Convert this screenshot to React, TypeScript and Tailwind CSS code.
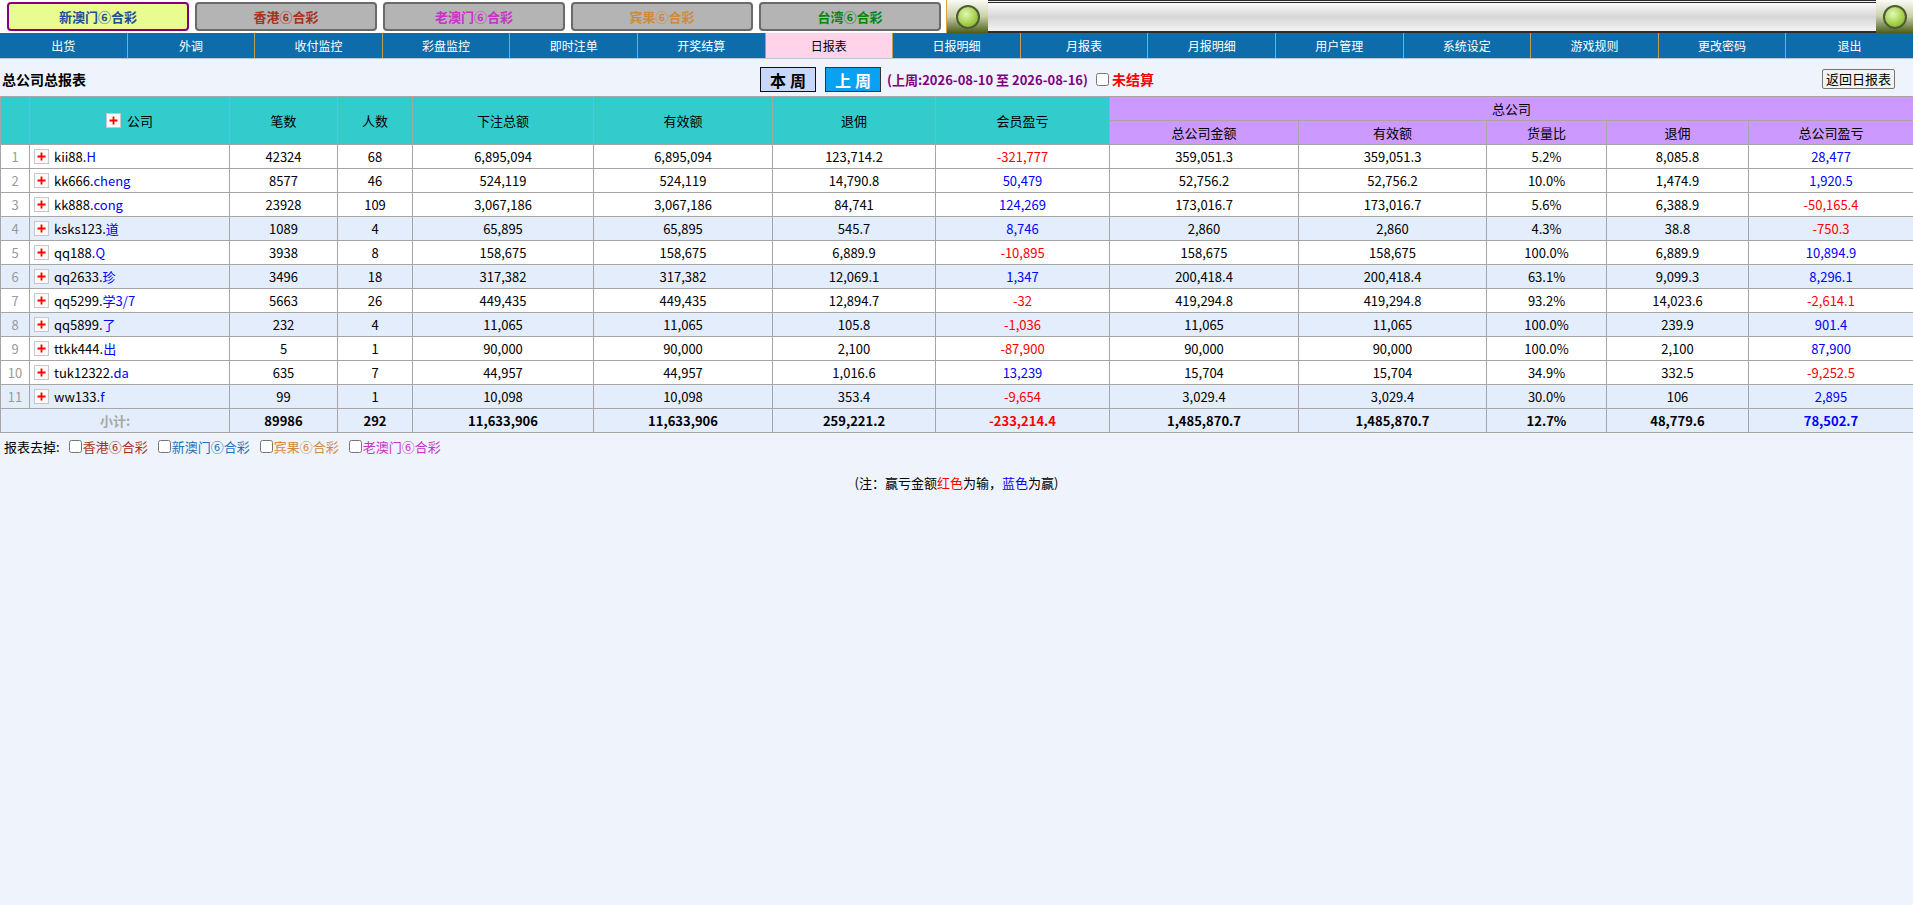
import React from 'react';

const FONT = { fontFamily: '"Noto Sans CJK SC", "Liberation Sans", sans-serif' };

const TABS = [
  { label: '新澳门⑥合彩', active: true, color: 'text-[#1b4f9a]' },
  { label: '香港⑥合彩', color: 'text-[#a8321e]' },
  { label: '老澳门⑥合彩', color: 'text-[#c832c8]' },
  { label: '宾果⑥合彩', color: 'text-[#d08a3c]' },
  { label: '台湾⑥合彩', color: 'text-[#0a840a]' },
];

const NAV = ['出货', '外调', '收付监控', '彩盘监控', '即时注单', '开奖结算', '日报表', '日报明细', '月报表', '月报明细', '用户管理', '系统设定', '游戏规则', '更改密码', '退出'];

const ROWS = [
  ['kii88.', 'H', '42324', '68', '6,895,094', '6,895,094', '123,714.2', '-321,777', '359,051.3', '359,051.3', '5.2%', '8,085.8', '28,477'],
  ['kk666.', 'cheng', '8577', '46', '524,119', '524,119', '14,790.8', '50,479', '52,756.2', '52,756.2', '10.0%', '1,474.9', '1,920.5'],
  ['kk888.', 'cong', '23928', '109', '3,067,186', '3,067,186', '84,741', '124,269', '173,016.7', '173,016.7', '5.6%', '6,388.9', '-50,165.4'],
  ['ksks123.', '道', '1089', '4', '65,895', '65,895', '545.7', '8,746', '2,860', '2,860', '4.3%', '38.8', '-750.3'],
  ['qq188.', 'Q', '3938', '8', '158,675', '158,675', '6,889.9', '-10,895', '158,675', '158,675', '100.0%', '6,889.9', '10,894.9'],
  ['qq2633.', '珍', '3496', '18', '317,382', '317,382', '12,069.1', '1,347', '200,418.4', '200,418.4', '63.1%', '9,099.3', '8,296.1'],
  ['qq5299.', '学3/7', '5663', '26', '449,435', '449,435', '12,894.7', '-32', '419,294.8', '419,294.8', '93.2%', '14,023.6', '-2,614.1'],
  ['qq5899.', '了', '232', '4', '11,065', '11,065', '105.8', '-1,036', '11,065', '11,065', '100.0%', '239.9', '901.4'],
  ['ttkk444.', '出', '5', '1', '90,000', '90,000', '2,100', '-87,900', '90,000', '90,000', '100.0%', '2,100', '87,900'],
  ['tuk12322.', 'da', '635', '7', '44,957', '44,957', '1,016.6', '13,239', '15,704', '15,704', '34.9%', '332.5', '-9,252.5'],
  ['ww133.', 'f', '99', '1', '10,098', '10,098', '353.4', '-9,654', '3,029.4', '3,029.4', '30.0%', '106', '2,895'],
];

const SHADED = [3, 5, 7, 10];

const COLS = [29, 200, 108, 75, 181, 179, 163, 174, 189, 188, 120, 142, 165];

function pl(v: string) {
  return v.startsWith('-') ? 'text-[#ff0000]' : 'text-[#0000ff]';
}

function PlusBox() {
  return (
    <span className="inline-flex items-center justify-center w-[15px] h-[15px] border border-[#c8c8c8] bg-[#fafafa] align-middle">
      <svg width="9" height="9" viewBox="0 0 9 9">
        <path d="M4.5 0.5v8M0.5 4.5h8" stroke="#ff0000" strokeWidth="1.8" />
      </svg>
    </span>
  );
}

function GreenKnob({ w }: { w: string }) {
  return (
    <div className={`${w} h-full flex items-center justify-center bg-gradient-to-b from-[#fbfbf4] via-[#c9cfa8] to-[#4e5f12]`}>
      <div className="w-[24px] h-[24px] rounded-full border-2 border-[#4f5a36] bg-[radial-gradient(circle_at_40%_35%,#e4f8b8,#a4d24a_55%,#72a02a)]" />
    </div>
  );
}

export default function App() {
  return (
    <div className="min-h-[905px] bg-[#eef3fc] text-[13px] text-black" style={FONT}>
      {/* top tabs */}
      <div className="h-[33px] bg-white flex">
        <div className="w-[946px] flex items-center gap-[6px] pl-[7px]">
          {TABS.map((t) => (
            <div
              key={t.label}
              className={`w-[182px] h-[29px] rounded-[4px] border-2 flex items-center justify-center font-bold text-[13px] ${t.color} ${
                t.active ? 'bg-[#e8fc92] border-[#800080]' : 'bg-[#b4b4b4] border-[#6a6a6a]'
              }`}
            >
              {t.label}
            </div>
          ))}
        </div>
        <div className="w-[1px] bg-[#e0a238]" />
        <GreenKnob w="w-[41px]" />
        <div className="flex-1 h-full border-t-[3px] border-double border-b-2 border-[#2a2a2a] bg-gradient-to-b from-[#fafafa] via-[#d6d6d6] to-[#f4f4f4]" />
        <GreenKnob w="w-[37px]" />
      </div>

      {/* nav */}
      <div className="h-[26px] bg-[#0f6caa] flex border-b border-[#b8c8d8]">
        {NAV.map((n, i) => (
          <div
            key={n}
            className={`flex-1 flex items-center justify-center text-[12px] ${i > 0 ? 'border-l border-[#c99a56]' : ''} ${
              n === '日报表' ? 'bg-[#ffd3ea] text-black' : 'text-white'
            }`}
          >
            {n}
          </div>
        ))}
      </div>

      {/* title bar */}
      <div className="h-[37px] flex items-center relative">
        <div className="pl-[2px] pt-[4px] font-bold text-[14px]">总公司总报表</div>
        <div className="absolute left-[760px] top-[8px] flex items-center">
          <div className="w-[56px] h-[25px] border border-[#111] bg-[#c8d8fc] flex items-center justify-center font-bold text-[16px] tracking-[4px] pl-[4px]">本周</div>
          <div className="ml-[9px] w-[56px] h-[25px] border border-[#333] bg-[#0aa1f0] text-white flex items-center justify-center font-bold text-[16px] tracking-[4px] pl-[4px]">上周</div>
          <div className="ml-[6px] text-[#800080] font-bold text-[13px]">(上周:2026-08-10 至 2026-08-16)</div>
          <label className="ml-[8px] flex items-center gap-[3px] text-[#ff0000] font-bold text-[14px]">
            <input type="checkbox" className="w-[13px] h-[13px]" />
            未结算
          </label>
        </div>
        <button className="ml-auto mr-[18px] mt-[2px] h-[20px] px-[3px] border border-[#777] rounded-[2px] bg-[#f2f2f2] text-[13px] leading-none">返回日报表</button>
      </div>

      {/* table */}
      <table className="w-full table-fixed border-collapse text-[13px]">
        <colgroup>
          {COLS.map((w, i) => (
            <col key={i} style={{ width: w }} />
          ))}
        </colgroup>
        <thead>
          <tr className="h-[24px]">
            <th rowSpan={2} className="bg-[#33cccc] border border-[#a6a6a6] font-normal" />
            <th rowSpan={2} className="bg-[#33cccc] border border-[#a6a6a6] font-normal">
              <span className="inline-flex items-center gap-[6px]">
                <PlusBox />
                公司
              </span>
            </th>
            {['笔数', '人数', '下注总额', '有效额', '退佣', '会员盈亏'].map((h) => (
              <th key={h} rowSpan={2} className="bg-[#33cccc] border border-[#a6a6a6] font-normal">
                {h}
              </th>
            ))}
            <th colSpan={5} className="bg-[#cc99ff] border border-[#a6a6a6] font-normal">总公司</th>
          </tr>
          <tr className="h-[24px]">
            {['总公司金额', '有效额', '货量比', '退佣', '总公司盈亏'].map((h) => (
              <th key={h + 'b'} className="bg-[#cc99ff] border border-[#a6a6a6] font-normal">
                {h}
              </th>
            ))}
          </tr>
        </thead>
        <tbody>
          {ROWS.map((r, i) => (
            <tr key={i} className={`h-[24px] ${SHADED.includes(i) ? 'bg-[#e3edfc]' : 'bg-white'}`}>
              <td className="border border-[#a6a6a6] text-center text-[#9a9a9a]">{i + 1}</td>
              <td className="border border-[#a6a6a6] pl-[4px]">
                <span className="inline-flex items-center gap-[5px]">
                  <PlusBox />
                  <span>
                    {r[0]}
                    <span className="text-[#0000ff]">{r[1]}</span>
                  </span>
                </span>
              </td>
              {r.slice(2).map((v, j) => (
                <td key={j} className={`border border-[#a6a6a6] text-center ${j === 5 || j === 10 ? pl(v) : ''}`}>
                  {v}
                </td>
              ))}
            </tr>
          ))}
          <tr className="h-[24px] bg-[#e3edfc] font-bold">
            <td colSpan={2} className="border border-[#a6a6a6] text-center text-[#a8a8a8]">小计:</td>
            {['89986', '292', '11,633,906', '11,633,906', '259,221.2', '-233,214.4', '1,485,870.7', '1,485,870.7', '12.7%', '48,779.6', '78,502.7'].map((v, j) => (
              <td key={j} className={`border border-[#a6a6a6] text-center ${j === 5 || j === 10 ? pl(v) : ''}`}>
                {v}
              </td>
            ))}
          </tr>
        </tbody>
      </table>

      {/* filters */}
      <div className="mt-[4px] pl-[4px] flex items-center text-[13px]">
        <span>报表去掉:</span>
        <label className="ml-[9px] flex items-center text-[#a8321e]">
          <input type="checkbox" className="w-[13px] h-[13px] mr-[1px]" />香港⑥合彩
        </label>
        <label className="ml-[10px] flex items-center text-[#1a72c4]">
          <input type="checkbox" className="w-[13px] h-[13px] mr-[1px]" />新澳门⑥合彩
        </label>
        <label className="ml-[10px] flex items-center text-[#d48a3a]">
          <input type="checkbox" className="w-[13px] h-[13px] mr-[1px]" />宾果⑥合彩
        </label>
        <label className="ml-[10px] flex items-center text-[#c832c8]">
          <input type="checkbox" className="w-[13px] h-[13px] mr-[1px]" />老澳门⑥合彩
        </label>
      </div>

      <div className="mt-[16px] text-center text-[13px]">
        (注：赢亏金额<span className="text-[#ff0000]">红色</span>为输，<span className="text-[#0000ff]">蓝色</span>为赢)
      </div>
    </div>
  );
}
